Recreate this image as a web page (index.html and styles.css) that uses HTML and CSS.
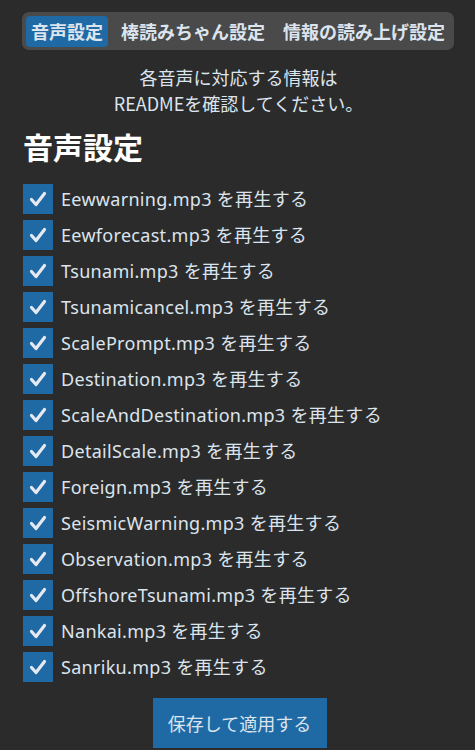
FILE: index.html
```html
<!DOCTYPE html>
<html lang="ja">
<head>
<meta charset="utf-8">
<link rel="stylesheet" href="styles.css">
</head>
<body>
<div class="page">
  <div class="tabs">
    <div class="tab active">音声設定</div>
    <div class="tab">棒読みちゃん設定</div>
    <div class="tab">情報の読み上げ設定</div>
  </div>
  <p class="desc">各音声に対応する情報は<br>READMEを確認してください。</p>
  <h1 class="title">音声設定</h1>
  <ul class="list">
    <li class="row"><span class="box"><svg viewBox="0 0 30 30"><path d="M8.5 15.5 L13 20.5 L21.5 9.5"/></svg></span><span class="label">Eewwarning.mp3 を再生する</span></li>
    <li class="row"><span class="box"><svg viewBox="0 0 30 30"><path d="M8.5 15.5 L13 20.5 L21.5 9.5"/></svg></span><span class="label">Eewforecast.mp3 を再生する</span></li>
    <li class="row"><span class="box"><svg viewBox="0 0 30 30"><path d="M8.5 15.5 L13 20.5 L21.5 9.5"/></svg></span><span class="label">Tsunami.mp3 を再生する</span></li>
    <li class="row"><span class="box"><svg viewBox="0 0 30 30"><path d="M8.5 15.5 L13 20.5 L21.5 9.5"/></svg></span><span class="label">Tsunamicancel.mp3 を再生する</span></li>
    <li class="row"><span class="box"><svg viewBox="0 0 30 30"><path d="M8.5 15.5 L13 20.5 L21.5 9.5"/></svg></span><span class="label">ScalePrompt.mp3 を再生する</span></li>
    <li class="row"><span class="box"><svg viewBox="0 0 30 30"><path d="M8.5 15.5 L13 20.5 L21.5 9.5"/></svg></span><span class="label">Destination.mp3 を再生する</span></li>
    <li class="row"><span class="box"><svg viewBox="0 0 30 30"><path d="M8.5 15.5 L13 20.5 L21.5 9.5"/></svg></span><span class="label">ScaleAndDestination.mp3 を再生する</span></li>
    <li class="row"><span class="box"><svg viewBox="0 0 30 30"><path d="M8.5 15.5 L13 20.5 L21.5 9.5"/></svg></span><span class="label">DetailScale.mp3 を再生する</span></li>
    <li class="row"><span class="box"><svg viewBox="0 0 30 30"><path d="M8.5 15.5 L13 20.5 L21.5 9.5"/></svg></span><span class="label">Foreign.mp3 を再生する</span></li>
    <li class="row"><span class="box"><svg viewBox="0 0 30 30"><path d="M8.5 15.5 L13 20.5 L21.5 9.5"/></svg></span><span class="label">SeismicWarning.mp3 を再生する</span></li>
    <li class="row"><span class="box"><svg viewBox="0 0 30 30"><path d="M8.5 15.5 L13 20.5 L21.5 9.5"/></svg></span><span class="label">Observation.mp3 を再生する</span></li>
    <li class="row"><span class="box"><svg viewBox="0 0 30 30"><path d="M8.5 15.5 L13 20.5 L21.5 9.5"/></svg></span><span class="label">OffshoreTsunami.mp3 を再生する</span></li>
    <li class="row"><span class="box"><svg viewBox="0 0 30 30"><path d="M8.5 15.5 L13 20.5 L21.5 9.5"/></svg></span><span class="label">Nankai.mp3 を再生する</span></li>
    <li class="row"><span class="box"><svg viewBox="0 0 30 30"><path d="M8.5 15.5 L13 20.5 L21.5 9.5"/></svg></span><span class="label">Sanriku.mp3 を再生する</span></li>
  </ul>
  <div class="actions"><button class="save">保存して適用する</button></div>
</div>
</body>
</html>
```

FILE: styles.css
```css
html, body {
  margin: 0;
  padding: 0;
  background: #2b2b2b;
  height: 100%;
  overflow: hidden;
}
body {
  font-family: "Noto Sans", "Noto Sans CJK JP", sans-serif;
  color: #dce4ee;
}
.page {
  padding: 12px 21px 0 23px;
  display: flex;
  flex-direction: column;
}
.tabs {
  display: flex;
  align-items: center;
  gap: 8px;
  background: #4a4a4a;
  border-radius: 7px;
  padding: 4px;
  height: 30px;
  margin-left: -1px;
}
.tab {
  font-family: "Noto Sans CJK JP", sans-serif;
  font-weight: bold;
  font-size: 18px;
  line-height: 31px;
  height: 31px;
  padding: 0 5px;
  border-radius: 4px;
  color: #dce4ee;
  white-space: nowrap;
}
.tab.active {
  background: #1f6aa5;
}
.desc {
  margin: 14px 0 0;
  text-align: center;
  font-family: "Noto Sans CJK JP", sans-serif;
  font-size: 18px;
  line-height: 26px;
}
.title {
  margin: 10px 0 0;
  font-family: "Noto Sans CJK JP", sans-serif;
  font-size: 30px;
  line-height: 40px;
  font-weight: bold;
  color: #ffffff;
}
.list {
  list-style: none;
  margin: 18px 0 0;
  padding: 0;
  display: flex;
  flex-direction: column;
  gap: 6px;
}
.row {
  display: flex;
  align-items: center;
  gap: 8px;
  height: 30px;
}
.box {
  width: 30px;
  height: 30px;
  background: #1f6aa5;
  flex: none;
  display: block;
}
.box svg {
  width: 30px;
  height: 30px;
  display: block;
}
.box path {
  fill: none;
  stroke: #e6eaf0;
  stroke-width: 3.2;
  stroke-linecap: round;
  stroke-linejoin: round;
}
.label {
  font-size: 18px;
  line-height: 30px;
  letter-spacing: 0.3px;
  white-space: nowrap;
}
.actions {
  display: flex;
  justify-content: center;
  margin-top: 16px;
  padding-left: 2px;
}
.save {
  background: #1f6aa5;
  border: none;
  color: #dce4ee;
  font-family: "Noto Sans CJK JP", sans-serif;
  font-size: 18px;
  width: 174px;
  height: 50px;
  padding: 0;
  border-radius: 0;
}
```
